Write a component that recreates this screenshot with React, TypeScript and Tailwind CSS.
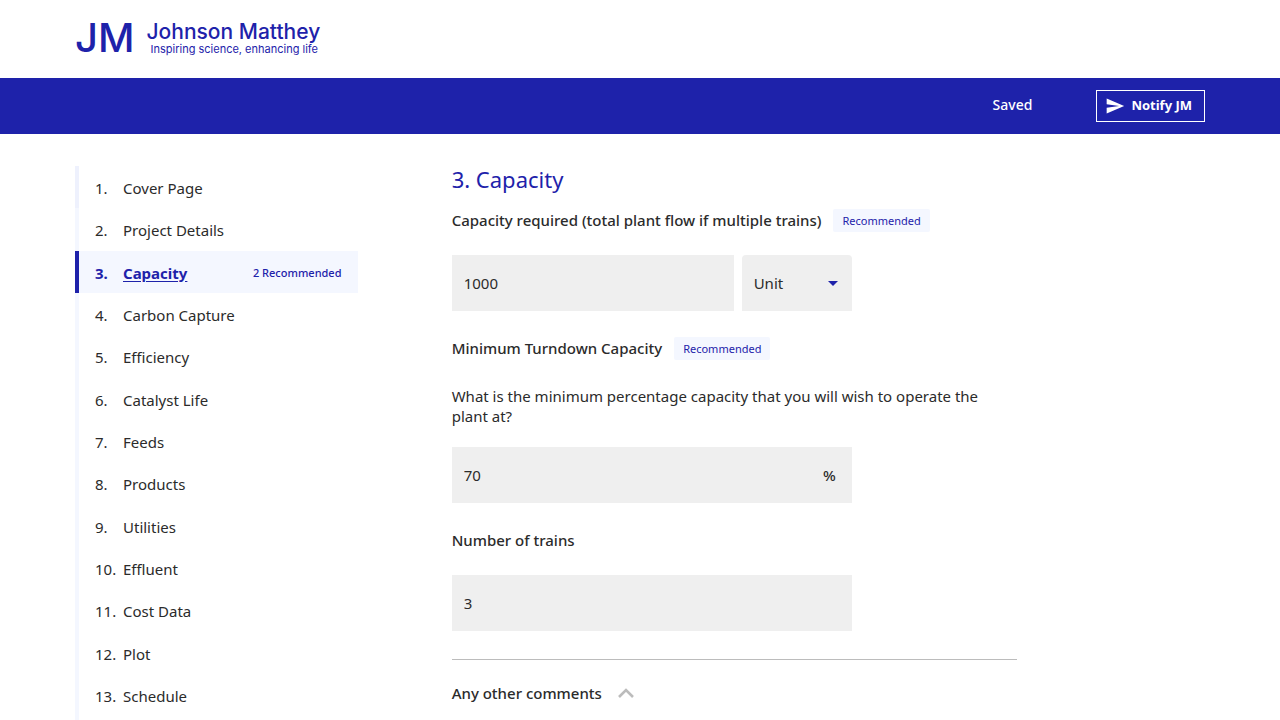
import { useState } from "react";
import type { ReactNode } from "react";

const sections = [
  "Cover Page",
  "Project Details",
  "Capacity",
  "Carbon Capture",
  "Efficiency",
  "Catalyst Life",
  "Feeds",
  "Products",
  "Utilities",
  "Effluent",
  "Cost Data",
  "Plot",
  "Schedule",
];

function Logo() {
  return (
    <a href="#" className="flex items-center gap-3 font-['Inter',sans-serif] text-[#1e22aa]">
      <span className="text-[40px] leading-7 font-medium">JM</span>
      <span className="flex flex-col">
        <span className="text-[21px] leading-[22px] font-medium">Johnson Matthey</span>
        <span className="pl-1 text-[11px] leading-3">Inspiring science, enhancing life</span>
      </span>
    </a>
  );
}

function SendIcon() {
  return (
    <svg viewBox="0 0 24 24" className="size-5" fill="currentColor" aria-hidden="true">
      <path d="M2.01 21 23 12 2.01 3 2 10l15 2-15 2z" />
    </svg>
  );
}

function Badge({ children }: { children: ReactNode }) {
  return (
    <span className="rounded-xs bg-[#f4f7ff] px-[9px] text-[11px] leading-[23px] text-[#1e22aa]">
      {children}
    </span>
  );
}

function SectionNav() {
  return (
    <nav className="col-span-3" aria-label="Sections">
      <ol className="border-l-4 border-[#f4f7ff] pb-8">
        {sections.map((name, i) => {
          const active = name === "Capacity";
          const tone = active
            ? "border-[#1e22aa] bg-[#f4f7ff] text-[#1e22aa] font-bold"
            : i === 0
              ? "border-[#eef1fd]"
              : "border-[#f4f7ff]";
          return (
            <li key={name} className={`-ml-1 flex items-center border-l-4 pt-[11px] pr-4 pb-[9px] pl-4 leading-[1.49] ${tone}`}>
              <span className="w-7 shrink-0">{i + 1}.</span>
              <a
                href="#"
                aria-current={active ? "page" : undefined}
                className={active ? "underline underline-offset-2" : ""}
              >
                {name}
              </a>
              {active && <span className="ml-auto text-[11px] leading-4 font-medium">2 Recommended</span>}
            </li>
          );
        })}
      </ol>
    </nav>
  );
}

export default function App() {
  const [capacity, setCapacity] = useState("1000");
  const [turndown, setTurndown] = useState("70");
  const [trains, setTrains] = useState("3");

  return (
    <div className="min-h-screen bg-white font-['Noto_Sans',sans-serif] text-[15px] text-[#2b2b2b]">
      <header>
        <div className="mx-auto flex h-[78px] max-w-[1130px] items-center pb-0.5">
          <Logo />
        </div>
        <div className="bg-[#1e22aa] text-white">
          <div className="mx-auto flex h-14 max-w-[1130px] items-center justify-end gap-16">
            <span className="pb-1 text-[14px] font-medium">Saved</span>
            <button
              type="button"
              className="flex h-8 items-center gap-1.5 border border-white pr-3 pl-2 text-[13px] font-bold"
            >
              <SendIcon />
              Notify JM
            </button>
          </div>
        </div>
      </header>

      <div className="mx-auto grid max-w-[1130px] grid-cols-12 pt-8">
        <SectionNav />

        <main className="col-span-6 col-start-5">
          <h1 className="text-[22px] leading-[26px] text-[#1e22aa]">3. Capacity</h1>

          <div className="mt-4 flex h-6 items-center gap-3">
            <label htmlFor="capacity" className="font-medium">
              Capacity required (total plant flow if multiple trains)
            </label>
            <Badge>Recommended</Badge>
          </div>
          <div className="mt-[23px] flex max-w-[400px] gap-2">
            <input
              id="capacity"
              value={capacity}
              onChange={(e) => setCapacity(e.target.value)}
              className="h-14 w-full min-w-0 flex-1 bg-[#efefef] px-3"
            />
            <div className="relative w-[110px]">
              <select
                aria-label="Unit"
                className="h-14 w-full appearance-none rounded-t bg-[#efefef] px-3"
              >
                <option>Unit</option>
              </select>
              <svg
                viewBox="0 0 10 5"
                className="pointer-events-none absolute top-[26px] right-3.5 h-[5px] w-2.5 fill-[#1e22aa]"
                aria-hidden="true"
              >
                <path d="M0 0h10L5 5z" />
              </svg>
            </div>
          </div>

          <div className="mt-[25px] flex h-6 items-center gap-3">
            <label htmlFor="turndown" className="font-medium">
              Minimum Turndown Capacity
            </label>
            <Badge>Recommended</Badge>
          </div>
          <p className="mt-[26px] leading-5">
            What is the minimum percentage capacity that you will wish to operate the plant at?
          </p>
          <div className="mt-[21px] flex h-14 max-w-[400px] items-center bg-[#efefef] pr-4">
            <input
              id="turndown"
              value={turndown}
              onChange={(e) => setTurndown(e.target.value)}
              className="h-full min-w-0 flex-1 px-3"
            />
            <span className="font-medium">%</span>
          </div>

          <div className="mt-[25px] flex h-6 items-center">
            <label htmlFor="trains" className="font-medium">
              Number of trains
            </label>
          </div>
          <input
            id="trains"
            value={trains}
            onChange={(e) => setTrains(e.target.value)}
            className="mt-[23px] block h-14 w-full max-w-[400px] bg-[#efefef] px-3"
          />

          <hr className="mt-7 border-[#bcbcbc]" />
          <button type="button" className="mt-5 flex h-[26px] items-center gap-4 font-medium">
            Any other comments
            <svg viewBox="0 0 16 10" className="h-2.5 w-4" fill="none" stroke="#bcbcbc" strokeWidth="2.6" aria-hidden="true">
              <path d="M1 9 8 2l7 7" />
            </svg>
          </button>
        </main>
      </div>
    </div>
  );
}
